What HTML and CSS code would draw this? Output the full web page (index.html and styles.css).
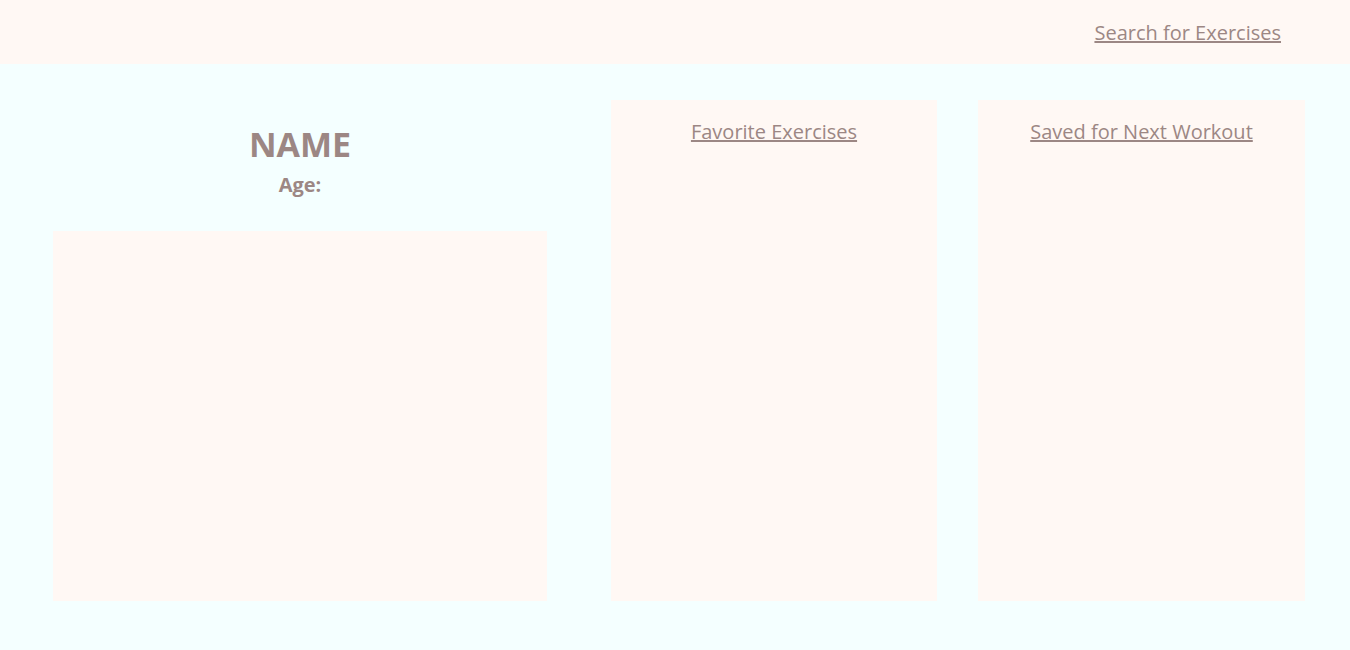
FILE: index.html
```html
<!DOCTYPE html>
<html>
<head>
<meta charset="utf-8">
<link rel="stylesheet" href="styles.css">
</head>
<body>
<header class="topbar">
  <a class="nav-link" href="#">Search for Exercises</a>
</header>
<main class="content">
  <section class="profile">
    <h1 class="profile-name">NAME</h1>
    <p class="profile-age">Age:</p>
    <div class="profile-box"></div>
  </section>
  <section class="card card-fav">
    <a class="card-title" href="#">Favorite Exercises</a>
  </section>
  <section class="card card-saved">
    <a class="card-title" href="#">Saved for Next Workout</a>
  </section>
</main>
</body>
</html>
```
FILE: styles.css
```css
html, body {
  margin: 0;
  padding: 0;
}
body {
  font-family: "Open Sans", "Liberation Sans", sans-serif;
  background: #f4ffff;
  color: #9c8784;
  height: 650px;
}
.topbar {
  height: 64px;
  background: #fff8f4;
  display: flex;
  align-items: center;
  justify-content: flex-end;
  padding-right: 69px;
}
.nav-link, .card-title {
  color: #9c8784;
  font-size: 20px;
  text-decoration: underline;
}
.content {
  display: flex;
  padding: 36px 45px 0 0;
  height: 501px;
}
.profile {
  width: 600px;
  display: flex;
  flex-direction: column;
  align-items: center;
}
.profile-name {
  margin: 22px 0 0;
  font-size: 34px;
  font-weight: 700;
  line-height: 44px;
}
.profile-age {
  margin: 8px 0 0;
  font-size: 20px;
  font-weight: 700;
  line-height: 22px;
}
.profile-box {
  margin-top: 35px;
  width: 494px;
  flex: 1;
  background: #fff8f4;
}
.card {
  background: #fff8f4;
  display: flex;
  justify-content: center;
  align-items: flex-start;
  padding-top: 18px;
  box-sizing: border-box;
}
.card-fav {
  margin-left: 11px;
  width: 326px;
}
.card-saved {
  margin-left: 41px;
  width: 327px;
}
```
